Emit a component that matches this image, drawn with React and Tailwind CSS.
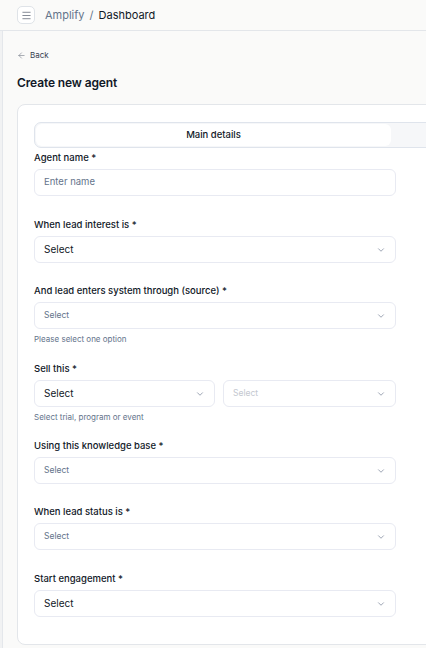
import { ChevronDown, ArrowLeft, Menu } from 'lucide-react';

const Label = ({ children }) => (
  <label className="block text-[9.5px] font-medium text-[#111827] leading-[12px] mb-[5px]">
    {children}
  </label>
);

const SelectBox = ({ text = 'Select', small, muted, className = 'w-[362px]' }) => (
  <div
    className={`${className} h-[27px] flex items-center justify-between rounded-[6px] border border-[#e8eaf2] bg-white pl-[9px] pr-[9px]`}
  >
    <span
      className={
        small
          ? `text-[8.5px] ${muted ? 'text-[#c4c8d0]' : 'text-[#64748b]'}`
          : 'text-[10px] text-[#111827]'
      }
    >
      {text}
    </span>
    <ChevronDown size={10} strokeWidth={2} className="text-[#8a94a6]" />
  </div>
);

const Helper = ({ children }) => (
  <p className="text-[8px] text-[#64748b] mt-[5px] leading-[10px]">{children}</p>
);

export default function App() {
  return (
    <div
      className="w-[426px] h-[648px] overflow-hidden bg-[#fafaf9] text-[#111827]"
      style={{ fontFamily: 'Inter, "Noto Sans", sans-serif' }}
    >
      <header className="h-[31px] flex items-center border-b border-[#e3e6ea] pl-[17px]">
        <div className="w-[18px] h-[18px] shrink-0 rounded-[5px] border border-[#dfe3e8] bg-white flex items-center justify-center">
          <Menu size={11} strokeWidth={1.8} className="text-[#6b7280]" />
        </div>
        <div className="ml-[10px] text-[11px] flex items-center gap-[5px]">
          <span className="text-[#64748b]">Amplify</span>
          <span className="text-[#64748b]">/</span>
          <span className="text-[#111827]">Dashboard</span>
        </div>
      </header>
      <div className="flex h-[617px]">
        <div className="w-[3px] shrink-0 bg-[#f1f2f3] border-r border-[#e4e7eb]" />
        <main className="flex-1 min-w-0 pl-[14px] pt-[18px]">
          <div className="flex items-center gap-[4px] text-[8px] text-[#374151] h-[12px]">
            <ArrowLeft size={9} strokeWidth={1.5} className="text-[#6b7280]" />
            <span>Back</span>
          </div>
          <h1 className="text-[12px] font-semibold tracking-[-0.01em] mt-[14px] leading-[16px]">
            Create new agent
          </h1>
          <div className="mt-[13px] w-[780px] bg-white border border-[#e3e6ea] rounded-[8px] pl-[16px] pt-[17px] pb-[27px]">
            <div className="w-[720px] h-[26px] flex rounded-[7px] border border-[#dfe4ec] bg-[#f6f7f9] p-[1px]">
              <div className="w-[355px] h-full rounded-[6px] bg-white flex items-center justify-center text-[9.5px] font-medium">
                Main details
              </div>
              <div className="flex-1" />
            </div>

            <div className="mt-[4px]">
              <Label>Agent name *</Label>
              <div className="w-[362px] h-[27px] flex items-center rounded-[6px] border border-[#e8eaf2] bg-white pl-[9px]">
                <span className="text-[9.5px] text-[#64748b]">Enter name</span>
              </div>
            </div>

            <div className="mt-[23px]">
              <Label>When lead interest is *</Label>
              <SelectBox />
            </div>

            <div className="mt-[22px]">
              <Label>And lead enters system through (source) *</Label>
              <SelectBox small />
              <Helper>Please select one option</Helper>
            </div>

            <div className="mt-[19px]">
              <Label>Sell this *</Label>
              <div className="flex gap-[8px]">
                <SelectBox className="w-[181px]" />
                <SelectBox className="w-[173px]" small muted />
              </div>
              <Helper>Select trial, program or event</Helper>
            </div>

            <div className="mt-[18px]">
              <Label>Using this knowledge base *</Label>
              <SelectBox small />
            </div>

            <div className="mt-[22px]">
              <Label>When lead status is *</Label>
              <SelectBox small />
            </div>

            <div className="mt-[23px]">
              <Label>Start engagement *</Label>
              <SelectBox />
            </div>
          </div>
        </main>
      </div>
    </div>
  );
}
